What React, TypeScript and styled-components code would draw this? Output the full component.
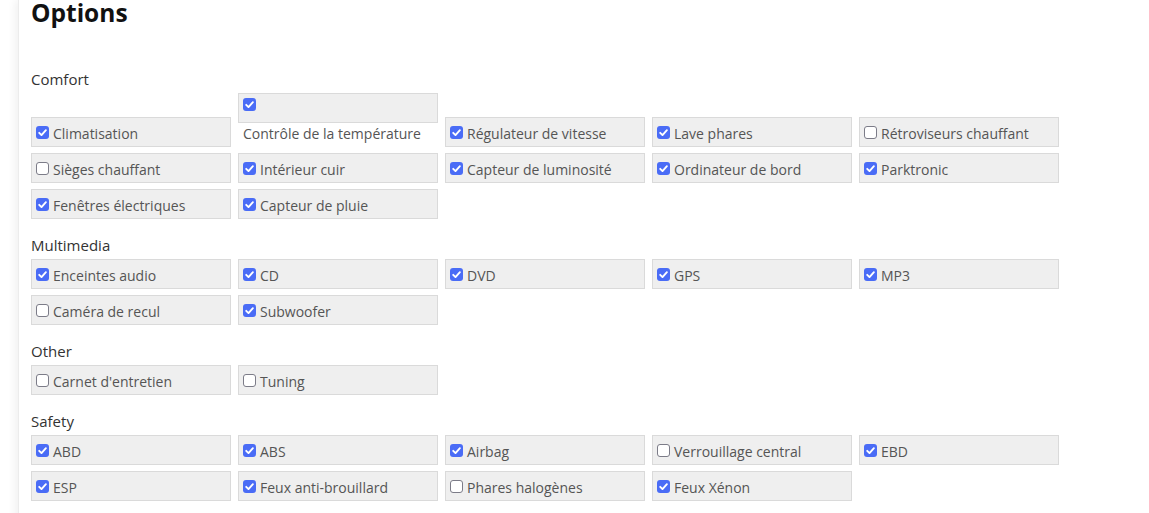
import React from 'react'
import styled, { createGlobalStyle } from 'styled-components'

const GlobalStyle = createGlobalStyle`
    html, body {
        margin:0;
        padding:0;
        background:#fff;
        font-family:"Open Sans", "Noto Sans", sans-serif;
    }
`

type Option = { label: string; checked: boolean }
type Group = { title: string; options: Option[] }

const groups: Group[] = [
    {
        title: 'Comfort',
        options: [
            { label: 'Climatisation', checked: true },
            { label: 'Contrôle de la température', checked: true },
            { label: 'Régulateur de vitesse', checked: true },
            { label: 'Lave phares', checked: true },
            { label: 'Rétroviseurs chauffant', checked: false },
            { label: 'Sièges chauffant', checked: false },
            { label: 'Intérieur cuir', checked: true },
            { label: 'Capteur de luminosité', checked: true },
            { label: 'Ordinateur de bord', checked: true },
            { label: 'Parktronic', checked: true },
            { label: 'Fenêtres électriques', checked: true },
            { label: 'Capteur de pluie', checked: true },
        ],
    },
    {
        title: 'Multimedia',
        options: [
            { label: 'Enceintes audio', checked: true },
            { label: 'CD', checked: true },
            { label: 'DVD', checked: true },
            { label: 'GPS', checked: true },
            { label: 'MP3', checked: true },
            { label: 'Caméra de recul', checked: false },
            { label: 'Subwoofer', checked: true },
        ],
    },
    {
        title: 'Other',
        options: [
            { label: "Carnet d'entretien", checked: false },
            { label: 'Tuning', checked: false },
        ],
    },
    {
        title: 'Safety',
        options: [
            { label: 'ABD', checked: true },
            { label: 'ABS', checked: true },
            { label: 'Airbag', checked: true },
            { label: 'Verrouillage central', checked: false },
            { label: 'EBD', checked: true },
            { label: 'ESP', checked: true },
            { label: 'Feux anti-brouillard', checked: true },
            { label: 'Phares halogènes', checked: false },
            { label: 'Feux Xénon', checked: true },
        ],
    },
]

const CheckBox = ({ checked }: { checked: boolean }) => (
    <Box $checked={checked} role="checkbox" aria-checked={checked}>
        {checked && (
            <svg width="13" height="13" viewBox="0 0 13 13">
                <polyline points="3.2,6.8 5.5,9.1 9.9,4.2" fill="none" stroke="#fff" strokeWidth="1.9" strokeLinecap="round" strokeLinejoin="round" />
            </svg>
        )}
    </Box>
)

const App = () => {
    return (
        <>
            <GlobalStyle />
            <Panel>
                <Title>Options</Title>
                {groups.map((group) => (
                    <section key={group.title}>
                        <GroupTitle>{group.title}</GroupTitle>
                        <OptionList>
                            {group.options.map((opt) => (
                                <OptionItem key={opt.label}>
                                    <CheckBox checked={opt.checked} />
                                    <OptionLabel>{opt.label}</OptionLabel>
                                </OptionItem>
                            ))}
                        </OptionList>
                    </section>
                ))}
            </Panel>
        </>
    )
}

export default App

const Panel = styled.div`
    margin-left:18px;
    min-height:100vh;
    padding:0 12px 20px;
    box-sizing:border-box;
    background:#fff;
    border-left:1px solid #ececec;
    box-shadow:-3px 0 8px rgba(0,0,0,.06);
`

const Title = styled.h2`
    margin:0 0 42px;
    font-size:24.5px;
    line-height:25px;
    font-weight:700;
    color:#111;
`

const GroupTitle = styled.h4`
    margin:8px 0 2px;
    font-size:15px;
    line-height:24px;
    font-weight:400;
    color:#333;
    section:first-of-type &{
        margin-top:0;
    }
`

const OptionList = styled.div`
    font-size:14px;
    line-height:24px;
`

const OptionItem = styled.div`
    display:inline-block;
    vertical-align:baseline;
    box-sizing:border-box;
    width:200px;
    height:30px;
    margin:0 7px 6px 0;
    padding:0 4px;
    background:#efefef;
    border:1px solid #dadada;
    color:#555;
`

const Box = styled.span<{ $checked: boolean }>`
    display:inline-block;
    box-sizing:border-box;
    width:13px;
    height:13px;
    margin:0 4px 0 0;
    overflow:hidden;
    vertical-align:baseline;
    border-radius:3px;
    background:${(p) => (p.$checked ? '#4a6cf6' : '#fff')};
    border:${(p) => (p.$checked ? 'none' : '1.5px solid #7c7c88')};
    svg{
        display:block;
    }
`

const OptionLabel = styled.label`
    display:inline-block;
    padding-top:4px;
    line-height:24px;
    vertical-align:baseline;
`
